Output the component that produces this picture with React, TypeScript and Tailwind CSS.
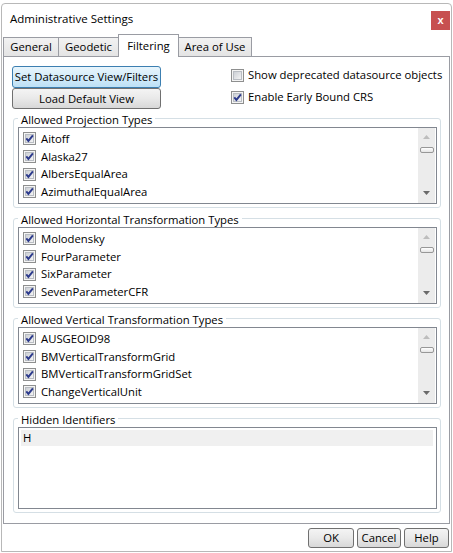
import React, { useId } from "react";

function Check({ checked }: { checked: boolean }) {
  const raw = useId();
  const id = "g" + raw.replace(/[^a-zA-Z0-9]/g, "");
  return (
    <svg width="13" height="13" viewBox="0 0 13 13" className="shrink-0 block">
      <defs>
        <linearGradient id={id} x1="0" y1="0" x2="1" y2="1">
          <stop offset="0" stopColor="#c9cdd3" />
          <stop offset="1" stopColor="#f6f6f6" />
        </linearGradient>
      </defs>
      <rect x="0.5" y="0.5" width="12" height="12" fill="#f4f4f4" stroke="#8e8f8f" />
      <rect x="2.5" y="2.5" width="8" height="8" fill={`url(#${id})`} stroke="#b9bdc3" />
      {checked && (
        <path d="M3.3 6.3 L5.4 8.9 L9.9 3.3" fill="none" stroke="#2c3a8c" strokeWidth="1.9" strokeLinejoin="miter" />
      )}
    </svg>
  );
}

function ScrollBar() {
  return (
    <div className="w-[17px] mr-[1px] bg-[#ececec] flex flex-col items-center shrink-0">
      <div className="h-[17px] w-full flex items-center justify-center">
        <svg width="7" height="4" viewBox="0 0 7 4" className="block">
          <path d="M0 4 L3.5 0 L7 4 Z" fill="#bdbdbd" />
        </svg>
      </div>
      <div className="mt-[2px] w-[14px] h-[6px] rounded-[2px] border border-[#979797] bg-linear-to-b from-white to-[#e4e4e4]" />
      <div className="flex-1" />
      <div className="h-[17px] mb-[2px] w-full flex items-center justify-center">
        <svg width="7" height="4" viewBox="0 0 7 4" className="block">
          <path d="M0 0 L7 0 L3.5 4 Z" fill="#6a6a6a" />
        </svg>
      </div>
    </div>
  );
}

function CheckList({ items }: { items: string[] }) {
  return (
    <div className="h-[77px] border border-[#828790] bg-white flex">
      <div className="flex-1 pt-[2px] flex flex-col">
        {items.map((t) => (
          <div key={t} className="h-[17.7px] flex items-center pl-[4px] gap-[5px] shrink-0">
            <Check checked />
            <span className="leading-[16px] whitespace-nowrap">{t}</span>
          </div>
        ))}
      </div>
      <ScrollBar />
    </div>
  );
}

function Group({ title, children, first }: { title: string; children: React.ReactNode; first?: boolean }) {
  return (
    <fieldset
      className={
        first
          ? "ml-[1px] mt-[1px] border border-[#d5dfe5] rounded-[3px] pl-[4px] pr-[3px] pb-[3px] min-w-0"
          : "ml-[1px] mt-[2px] border border-[#d5dfe5] rounded-[3px] pl-[4px] pr-[3px] pb-[3px] min-w-0"
      }
    >
      <legend className="px-[3px] pt-[3px] leading-[13px] whitespace-nowrap">{title}</legend>
      <div className="mt-[1px]">{children}</div>
    </fieldset>
  );
}

function GrayButton({ label, w }: { label: string; w: string }) {
  return (
    <div
      className={
        w +
        " h-[20px] border border-[#707070] rounded-[3px] bg-linear-to-b from-[#f4f4f4] via-[#e9e9e9] to-[#d8d8d8] flex items-center justify-center leading-[16px]"
      }
    >
      {label}
    </div>
  );
}

export default function App() {
  return (
    <div className="w-[453px] h-[553px] bg-white [font-family:'Open_Sans','Segoe_UI',sans-serif] text-[11.3px] text-black overflow-hidden">
      <div className="ml-[1px] mt-[3px] w-[451px] h-[549px] border border-[#b8b8b8] rounded-t-[4px] flex flex-col">
        {/* Title bar */}
        <div className="h-[30px] flex items-start shrink-0">
          <div className="ml-[8px] mt-[7px] leading-[16px] text-[11.5px] whitespace-nowrap">Administrative Settings</div>
          <div className="ml-auto mt-[7px] mr-[1px] w-[19px] h-[19px] bg-[#c75050] text-white flex items-center justify-center text-[11px] font-bold leading-none [font-family:'Liberation_Sans',sans-serif]">
            x
          </div>
        </div>

        {/* Tabs */}
        <div className="h-[22px] flex items-end pl-[1px] shrink-0">
          <div className="w-[56px] h-[19px] border border-b-0 border-[#9a9ca3] bg-linear-to-b from-[#f2f2f2] to-[#e4e4e4] flex items-center justify-center leading-[16px]">
            General
          </div>
          <div className="-ml-px w-[61px] h-[19px] border border-b-0 border-[#9a9ca3] bg-linear-to-b from-[#f2f2f2] to-[#e4e4e4] flex items-center justify-center leading-[16px]">
            Geodetic
          </div>
          <div className="relative z-10 -ml-px -mb-px w-[61px] h-[23px] border border-b-0 border-[#9a9ca3] bg-white flex items-center justify-center leading-[16px] pb-[1px]">
            Filtering
          </div>
          <div className="-ml-px w-[74px] h-[19px] border border-b-0 border-[#9a9ca3] bg-linear-to-b from-[#f2f2f2] to-[#e4e4e4] flex items-center justify-center leading-[16px] whitespace-nowrap">
            Area of Use
          </div>
        </div>

        {/* Panel */}
        <div className="mx-[1px] h-[468px] shrink-0 border border-[#9a9ca3] bg-white pt-[9px] px-[8px] flex flex-col">
          <div className="h-[43px] flex shrink-0">
            <div className="w-[149px] flex flex-col shrink-0">
              <div className="h-[22px] border border-[#3c7fb1] rounded-[3px] bg-linear-to-b from-[#e8f5fc] via-[#d3ecfa] to-[#bde0f5] flex items-center justify-center leading-[16px] whitespace-nowrap">
                Set Datasource View/Filters
              </div>
              <div className="h-[21px] border border-[#707070] rounded-[3px] bg-linear-to-b from-[#f4f4f4] via-[#e9e9e9] to-[#d8d8d8] flex items-center justify-center leading-[16px] whitespace-nowrap">
                Load Default View
              </div>
            </div>
            <div className="ml-[70px] flex flex-col">
              <div className="h-[16px] mt-[1px] flex items-center gap-[4px]">
                <Check checked={false} />
                <span className="leading-[16px] whitespace-nowrap">Show deprecated datasource objects</span>
              </div>
              <div className="mt-[6px] h-[16px] flex items-center gap-[4px]">
                <Check checked />
                <span className="leading-[16px] whitespace-nowrap">Enable Early Bound CRS</span>
              </div>
            </div>
          </div>

          <Group title="Allowed Projection Types" first>
            <CheckList items={["Aitoff", "Alaska27", "AlbersEqualArea", "AzimuthalEqualArea"]} />
          </Group>
          <Group title="Allowed Horizontal Transformation Types">
            <CheckList items={["Molodensky", "FourParameter", "SixParameter", "SevenParameterCFR"]} />
          </Group>
          <Group title="Allowed Vertical Transformation Types">
            <CheckList
              items={["AUSGEOID98", "BMVerticalTransformGrid", "BMVerticalTransformGridSet", "ChangeVerticalUnit"]}
            />
          </Group>
          <Group title="Hidden Identifiers">
            <div className="h-[82px] border border-[#828790] bg-white pt-[2px] pl-[2px] pr-[3px]">
              <div className="h-[16px] bg-[#f0f0f0] pl-[2px] flex items-center leading-[16px]">H</div>
            </div>
          </Group>
        </div>

        {/* Bottom buttons */}
        <div className="flex-1 flex justify-end items-start pt-[4px] pr-[2px] gap-[3px]">
          <GrayButton label="OK" w="w-[46px]" />
          <GrayButton label="Cancel" w="w-[44px]" />
          <GrayButton label="Help" w="w-[45px]" />
        </div>
      </div>
    </div>
  );
}
